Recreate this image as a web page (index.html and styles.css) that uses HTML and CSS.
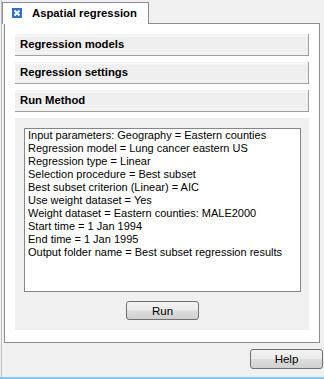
FILE: index.html
```html
<!DOCTYPE html>
<html lang="en">
<head>
    <meta charset="UTF-8">
    <title>Aspatial regression</title>
    <link rel="stylesheet" href="styles.css">
</head>
<body>
    <div class="window">
        <div class="tabs">
            <div class="tab">
                <svg class="tab-icon" width="10" height="10" viewBox="0 0 10 10">
                    <rect x="0" y="0" width="10" height="10" fill="#2f6fd0"/>
                    <path d="M2.5 2.5 L7.5 7.5 M7.5 2.5 L2.5 7.5" stroke="#fff" stroke-width="2"/>
                </svg>
                <span>Aspatial regression</span>
            </div>
        </div>

        <div class="panel">
            <div class="section-header">Regression models</div>
            <div class="section-header">Regression settings</div>
            <div class="section-header">Run Method</div>
            <div class="section-body">
                <div class="output">
                    <div>Input parameters: Geography = Eastern counties</div>
                    <div>Regression model = Lung cancer eastern US</div>
                    <div>Regression type = Linear</div>
                    <div>Selection procedure = Best subset</div>
                    <div>Best subset criterion (Linear) = AIC</div>
                    <div>Use weight dataset = Yes</div>
                    <div>Weight dataset = Eastern counties: MALE2000</div>
                    <div>Start time = 1 Jan 1994</div>
                    <div>End time = 1 Jan 1995</div>
                    <div>Output folder name = Best subset regression results</div>
                </div>
                <button class="btn run-btn">Run</button>
            </div>
        </div>

        <div class="footer">
            <button class="btn help-btn">Help</button>
        </div>
    </div>
    <div class="status-line"></div>
</body>
</html>
```

FILE: styles.css
```css
* {
    box-sizing: border-box;
}

html, body {
    margin: 0;
    padding: 0;
}

body {
    width: 324px;
    height: 379px;
    overflow: hidden;
    background-color: #f0f0f0;
    font-family: "Liberation Sans", Arial, sans-serif;
    color: #000;
}

.window {
    margin-left: 1px;
    height: 377px;
    border-left: 1px solid #bdbdbd;
}

.tabs {
    display: flex;
    height: 24px;
    padding-top: 2px;
    margin-bottom: -1px;
}

.tab {
    position: relative;
    z-index: 1;
    display: flex;
    align-items: center;
    width: 147px;
    height: 22px;
    padding-left: 9px;
    padding-bottom: 1px;
    border: 1px solid #898c95;
    border-bottom: none;
    background-color: #fff;
    font-size: 11.3px;
    font-weight: bold;
}

.tab-icon {
    margin-right: 10px;
    flex: none;
}

.panel {
    margin-left: 2px;
    width: 316px;
    height: 320px;
    padding: 10px 10px 0 10px;
    border: 1px solid #898c95;
    background-color: #fff;
}

.section-header {
    height: 22px;
    margin-bottom: 6px;
    padding-left: 5px;
    line-height: 21px;
    font-size: 11.3px;
    font-weight: bold;
    background: linear-gradient(#f0f0f0 0, #f8f8f8 2px, #efefef 3px, #efefef 18px, #f7f7f7 19px, #efefef 20px);
    border-right: 1px solid #a0a0a0;
    border-bottom: 1px solid #a0a0a0;
}

.section-body {
    display: flex;
    flex-direction: column;
    align-items: center;
    padding: 10px 8px 10px 9px;
    background-color: #f0f0f0;
}

.output {
    align-self: stretch;
    height: 164px;
    padding: 0 3px;
    border: 1px solid #828790;
    background-color: #fff;
    font-size: 11px;
    line-height: 13px;
    white-space: nowrap;
    overflow: hidden;
}

.btn {
    width: 73px;
    height: 20px;
    padding: 0;
    border: 1px solid #707070;
    border-radius: 3px;
    background: linear-gradient(#f2f2f2 0%, #ebebeb 48%, #dddddd 52%, #cfcfcf 100%);
    font-family: "Liberation Sans", Arial, sans-serif;
    font-size: 11.5px;
    color: #000;
}

.run-btn {
    height: 19px;
    margin-top: 9px;
}

.footer {
    display: flex;
    justify-content: flex-end;
    padding-top: 6px;
    padding-right: 1px;
}

.status-line {
    height: 2px;
    background-color: #7fcbea;
}
```
